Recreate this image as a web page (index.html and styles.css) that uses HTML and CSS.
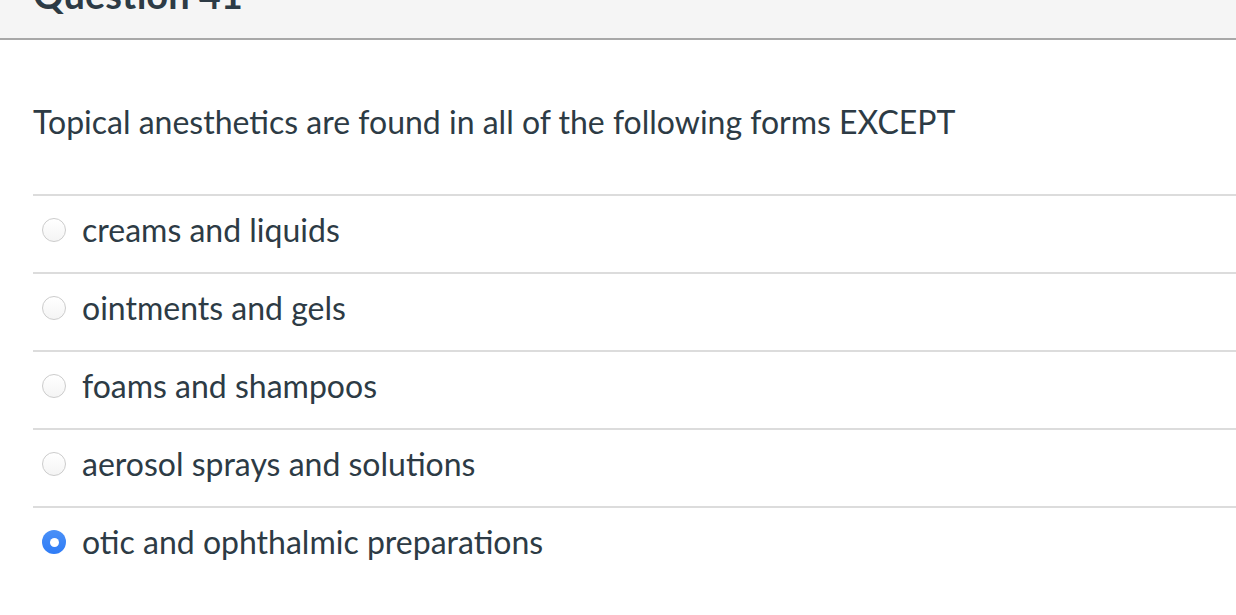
FILE: index.html
```html
<!DOCTYPE html>
<html>
<head>
<meta charset="utf-8">
<link rel="stylesheet" href="styles.css">
</head>
<body>
<div class="header"><h2 class="title">Question 41</h2></div>
<div class="body">
  <p class="question">Topical anesthetics are found in all of the following forms EXCEPT</p>
  <div class="answers">
    <label class="answer"><span class="radio"></span><span class="label">creams and liquids</span></label>
    <label class="answer"><span class="radio"></span><span class="label">ointments and gels</span></label>
    <label class="answer"><span class="radio"></span><span class="label">foams and shampoos</span></label>
    <label class="answer"><span class="radio"></span><span class="label">aerosol sprays and solutions</span></label>
    <label class="answer"><span class="radio checked"></span><span class="label">otic and ophthalmic preparations</span></label>
  </div>
</div>
</body>
</html>
```
FILE: styles.css
```css
html, body {
  margin: 0;
  padding: 0;
  background: #fff;
}
body {
  font-family: Lato, "Open Sans", sans-serif;
  color: #2d3b45;
  width: 1236px;
  overflow: hidden;
}
.header {
  height: 38px;
  background: #f5f5f5;
  border-bottom: 2px solid #a8a8a8;
  overflow: hidden;
  padding-left: 33px;
}
.title {
  margin: -30px 0 0 0;
  font-size: 38px;
  line-height: 48px;
  font-weight: 700;
  color: #2d3b45;
}
.body {
  padding-left: 33px;
}
.question {
  margin: 0;
  padding-top: 62px;
  font-size: 32px;
  line-height: 40px;
  height: 92px;
  box-sizing: content-box;
}
.answers {
  border-top: 2px solid #dcdcdc;
}
.answer {
  display: flex;
  align-items: center;
  height: 68px;
  padding-bottom: 8px;
  border-bottom: 2px solid #dcdcdc;
}
.answer:last-child {
  border-bottom: none;
}
.radio {
  width: 22px;
  height: 22px;
  border-radius: 50%;
  border: 1px solid #cccccc;
  background: linear-gradient(#ffffff, #f4f4f4);
  margin-left: 9px;
  margin-right: 16px;
  flex: none;
  position: relative;
}
.radio.checked {
  border: none;
  width: 24px;
  height: 24px;
  background: linear-gradient(#4a90f7, #2f7cf6);
}
.radio.checked::after {
  content: "";
  position: absolute;
  left: 7.5px;
  top: 7.5px;
  width: 9px;
  height: 9px;
  border-radius: 50%;
  background: #fff;
}
.label {
  font-size: 32px;
  line-height: 38px;
}
```
